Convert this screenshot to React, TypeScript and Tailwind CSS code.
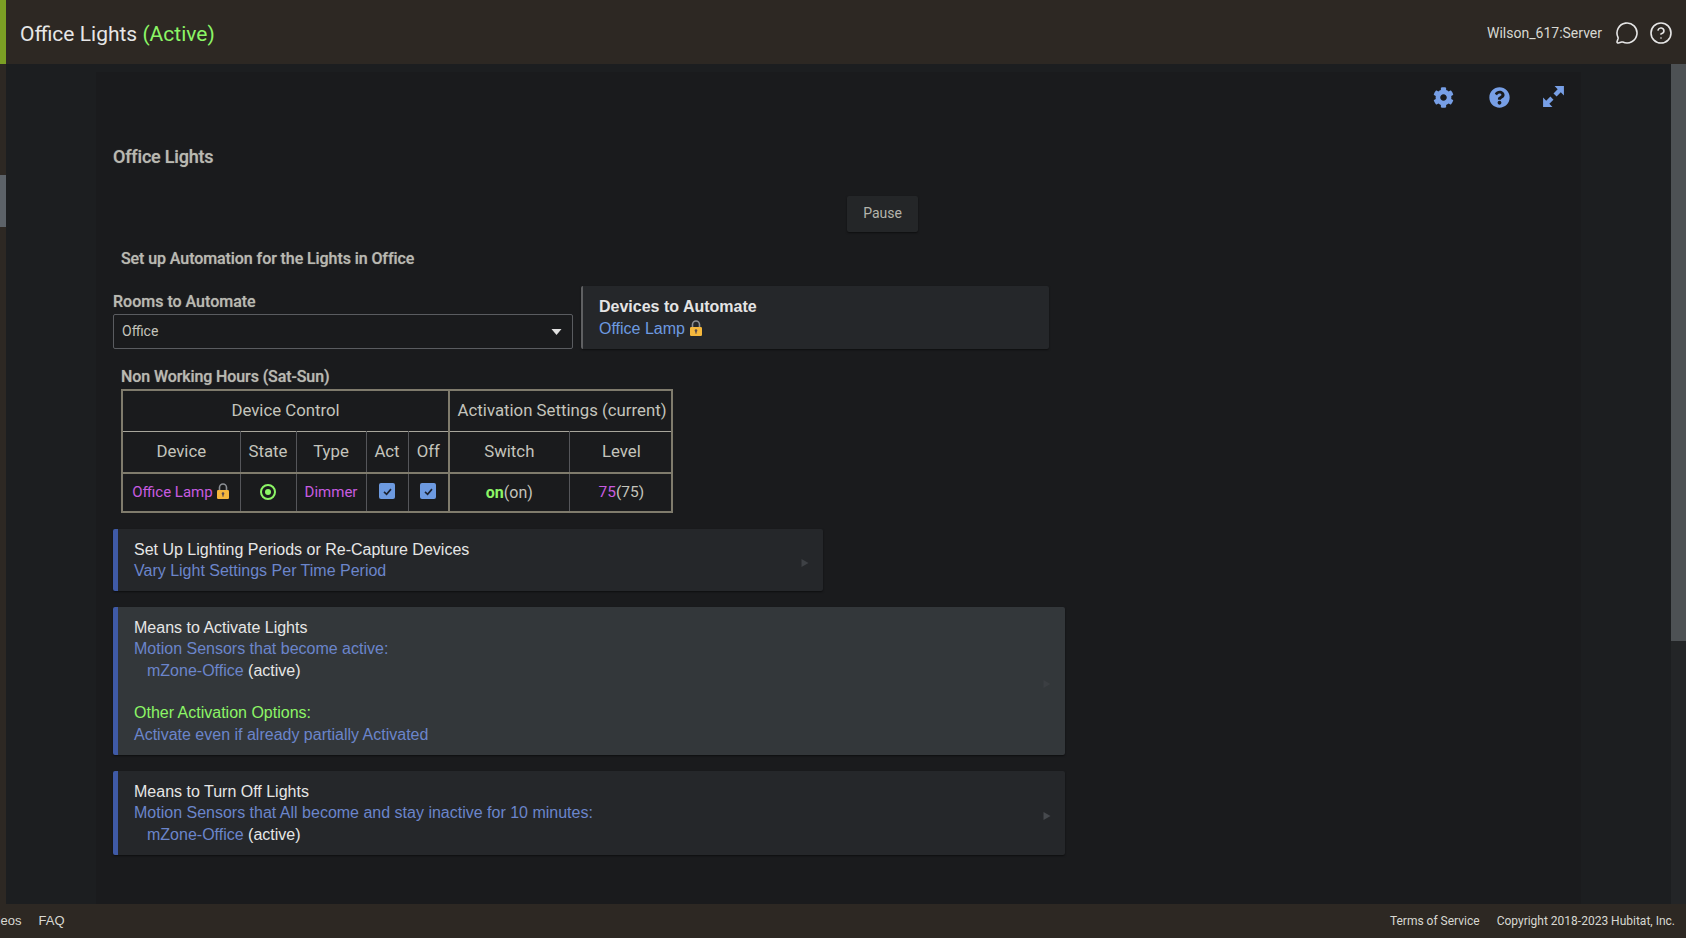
import { CircleHelp, MessageCircle } from "lucide-react";
import { FaCog, FaQuestionCircle } from "react-icons/fa";

const arial = "font-['Liberation_Sans',Arial,sans-serif]";
const heading = "font-medium text-[#b9b9b1] [text-shadow:0_0_1px_rgba(185,185,177,0.6)]";

function LockIcon() {
    return (
        <svg viewBox="0 0 14 16" className="inline-block h-[16px] w-[14px] align-[-2px]">
            <path d="M3.5 7V4.5a3.5 3.5 0 0 1 7 0V7" fill="none" stroke="#8b8f94" strokeWidth="1.6" />
            <rect x="1" y="7" width="12" height="9" rx="1.2" fill="#f5b83d" />
            <circle cx="7" cy="10.6" r="1.3" fill="#5a4a50" />
            <rect x="6.4" y="11" width="1.2" height="2.6" fill="#5a4a50" />
        </svg>
    );
}

function CheckIcon() {
    return (
        <span className="inline-flex h-[16px] w-[16px] items-center justify-center rounded-[2px] bg-[#6d9ae0]">
            <svg viewBox="0 0 12 12" className="h-[11px] w-[11px]">
                <path d="M2.2 6.4 5 9l4.8-5.6" fill="none" stroke="#1b2230" strokeWidth="1.8" />
            </svg>
        </span>
    );
}

function PanelArrow({ color }: { color: string }) {
    return (
        <svg viewBox="0 0 8 8" className="mt-[6px] mr-[14px] h-[8px] w-[8px] shrink-0">
            <path d="M0.5 0 L7.5 4 L0.5 8 Z" fill={color} />
        </svg>
    );
}

function Panel({ bg, arrow, className, children }: { bg: string; arrow: string; className: string; children: React.ReactNode }) {
    return (
        <div className={`mt-4 flex items-center justify-between rounded-[2px] border-l-[5px] border-[#3f5aa6] shadow-[0_1px_2px_rgba(0,0,0,0.5)] ${bg} ${className} ${arial}`}>
            <div className="pl-[16px] text-[16px] leading-[21.4px] text-[#6b85cb]">{children}</div>
            <PanelArrow color={arrow} />
        </div>
    );
}

function ZoneLine() {
    return (
        <div className="pl-[13px]">
            mZone-Office <span className="text-[#e6e6e6]">(active)</span>
        </div>
    );
}

export default function App() {
    return (
        <div className="flex h-[938px] w-[1686px] flex-col overflow-hidden bg-[#1c1e20] font-['Roboto',sans-serif] text-[#c4c4bc]">
            <header className="flex h-[64px] shrink-0 items-center border-l-[6px] border-[#7b9f24] bg-[#2d2823] pt-[2px] pr-[13px] pl-[14px]">
                <h1 className="pt-[3px] text-[21px] font-normal text-[#e6e6e6]">
                    Office Lights <span className="text-[#8cf566]">(Active)</span>
                </h1>
                <span className="ml-auto text-[14px] text-[#d8d8d2]">Wilson_617:Server</span>
                <MessageCircle className="ml-[13px] h-[24px] w-[24px] text-[#e6e6e6]" strokeWidth={1.6} />
                <CircleHelp className="ml-[10px] h-[24px] w-[24px] text-[#e6e6e6]" strokeWidth={1.6} />
            </header>

            <div className="flex min-h-0 flex-1">
                <div className="flex w-[6px] shrink-0 flex-col bg-[#2d2823]">
                    <div className="mt-[111px] h-[52px] bg-[#5c6268]" />
                </div>

                <div className="flex flex-1 pt-[8px] pl-[90px]">
                    <main className="w-[1485px] bg-[#1a1b1d] pt-[14px] pl-[17px]">
                        <div className="flex h-[22px] items-center justify-end pr-[15px] text-[#779fe6]">
                            <FaCog className="h-[21px] w-[21px]" />
                            <FaQuestionCircle className="ml-[35px] h-[21px] w-[21px]" />
                            <svg viewBox="0 0 24 24" className="ml-[31px] -mt-[2px] h-[25px] w-[25px]" fill="currentColor">
                                <path d="M13 2 H22 V11 L19 8 L15 12 L12 9 L16 5 Z" />
                                <path d="M11 22 H2 V13 L5 16 L9 12 L12 15 L8 19 Z" />
                            </svg>
                        </div>

                        <h2 className={`mt-[37px] text-[18px] leading-[24px] tracking-[-0.2px] ${heading}`}>Office Lights</h2>

                        <button className="mt-[27px] ml-[734px] block h-[36px] w-[71px] rounded-[2px] bg-[#242628] pb-[1px] text-[14px] text-[#b4b4ac] shadow-[0_1px_2px_rgba(0,0,0,0.5)]">
                            Pause
                        </button>

                        <p className={`mt-[17px] ml-[8px] text-[16px] leading-[20px] tracking-[-0.08px] ${heading}`}>
                            Set up Automation for the Lights in Office
                        </p>

                        <div className="mt-[17px] flex h-[63px] gap-[8px]">
                            <div className="flex w-[460px] flex-col justify-end">
                                <label className={`mb-[2px] text-[16px] leading-[20px] ${heading}`}>Rooms to Automate</label>
                                <div className="flex h-[35px] items-center justify-between rounded-[2px] border border-[#5a5c60] pr-[10px] pl-[8px] text-[14px] text-[#c4c4bc]">
                                    Office
                                    <svg viewBox="0 0 10 6" className="h-[6px] w-[11px]">
                                        <path d="M0 0 H10 L5 6 Z" fill="#e0e0e0" />
                                    </svg>
                                </div>
                            </div>
                            <div className={`flex w-[468px] flex-col justify-center rounded-[2px] border-l-2 border-[#5f6062] bg-[#25272a] pl-[16px] text-[16px] leading-[22px] shadow-[0_1px_2px_rgba(0,0,0,0.5)] ${arial}`}>
                                <div className="font-bold text-[#e4e4e4]">Devices to Automate</div>
                                <div className="text-[#6d9ae0]">
                                    Office Lamp <LockIcon />
                                </div>
                            </div>
                        </div>

                        <p className={`mt-[18px] ml-[8px] text-[16px] leading-[20px] tracking-[-0.1px] ${heading}`}>Non Working Hours (Sat-Sun)</p>

                        <table className="mt-[2px] ml-[8px] h-[122px] w-[550px] table-fixed border-collapse border-2 border-[#7f7b6c] text-center text-[16.8px]">
                            <colgroup>
                                <col className="w-[118px]" />
                                <col className="w-[56px]" />
                                <col className="w-[70px]" />
                                <col className="w-[42px]" />
                                <col className="w-[41px]" />
                                <col className="w-[120px]" />
                                <col className="w-[103px]" />
                            </colgroup>
                            <thead>
                                <tr className="h-[41px] border-b border-[#a8a69c]">
                                    <th colSpan={5} className="font-normal">Device Control</th>
                                    <th colSpan={2} className="border-l-2 border-[#7f7b6c] pl-[3px] font-normal whitespace-nowrap">Activation Settings (current)</th>
                                </tr>
                                <tr className="h-[42px] border-b-2 border-[#7f7b6c]">
                                    <th className="border-r border-[#55565a] font-normal">Device</th>
                                    <th className="border-r border-[#55565a] font-normal">State</th>
                                    <th className="border-r border-[#55565a] font-normal">Type</th>
                                    <th className="border-r border-[#55565a] font-normal">Act</th>
                                    <th className="font-normal">Off</th>
                                    <th className="border-r border-l-2 border-[#55565a] border-l-[#7f7b6c] font-normal">Switch</th>
                                    <th className="pl-[2px] font-normal">Level</th>
                                </tr>
                            </thead>
                            <tbody>
                                <tr className="h-[39px]">
                                    <td className="border-r border-[#55565a] text-[15px] whitespace-nowrap text-[#c85ce0]">
                                        Office Lamp <LockIcon />
                                    </td>
                                    <td className="border-r border-[#55565a]">
                                        <span className="mb-[3px] inline-flex h-[16px] w-[16px] items-center justify-center rounded-full border-2 border-[#8cf566] align-middle">
                                            <span className="h-[6px] w-[6px] rounded-full bg-[#8cf566]" />
                                        </span>
                                    </td>
                                    <td className="border-r border-[#55565a] text-[15px] text-[#c85ce0]">Dimmer</td>
                                    <td className="border-r border-[#55565a] align-middle"><span className="relative -top-[2px] inline-flex align-middle"><CheckIcon /></span></td>
                                    <td className="align-middle"><span className="relative -top-[2px] inline-flex align-middle"><CheckIcon /></span></td>
                                    <td className="border-r border-l-2 border-[#55565a] border-l-[#7f7b6c] text-[16px]">
                                        <span className="font-bold text-[#8cf566]">on</span>(on)
                                    </td>
                                    <td className="pl-[2px] text-[15.5px]">
                                        <span className="text-[#c85ce0]">75</span>(75)
                                    </td>
                                </tr>
                            </tbody>
                        </table>

                        <Panel bg="bg-[#25272a]" arrow="#3e4145" className="h-[62px] w-[710px]">
                            <div className="text-[#e6e6e6]">Set Up Lighting Periods or Re-Capture Devices</div>
                            <div>Vary Light Settings Per Time Period</div>
                        </Panel>

                        <Panel bg="bg-[#33373a]" arrow="#3b3e42" className="h-[148px] w-[952px]">
                            <div className="text-[#e6e6e6]">Means to Activate Lights</div>
                            <div>Motion Sensors that become active:</div>
                            <ZoneLine />
                            <div className="h-[21.4px]" />
                            <div className="text-[#8cf566]">Other Activation Options:</div>
                            <div>Activate even if already partially Activated</div>
                        </Panel>

                        <Panel bg="bg-[#25272a]" arrow="#46494d" className="h-[84px] w-[952px]">
                            <div className="text-[#e6e6e6]">Means to Turn Off Lights</div>
                            <div>Motion Sensors that All become and stay inactive for 10 minutes:</div>
                            <ZoneLine />
                        </Panel>
                    </main>
                </div>

                <div className="w-[15px] shrink-0 bg-[#232527]">
                    <div className="h-[577px] bg-[#4d5154]" />
                </div>
            </div>

            <footer className="flex h-[34px] shrink-0 items-center overflow-hidden bg-[#2d2823] pr-[11px] text-[12px] text-[#d8d8d2]">
                <span className={`-ml-[18px] text-[13px] ${arial}`}>Videos</span>
                <span className={`ml-[17px] text-[13px] ${arial}`}>FAQ</span>
                <span className="ml-auto">Terms of Service</span>
                <span className="ml-[17px]">Copyright 2018-2023 Hubitat, Inc.</span>
            </footer>
        </div>
    );
}
